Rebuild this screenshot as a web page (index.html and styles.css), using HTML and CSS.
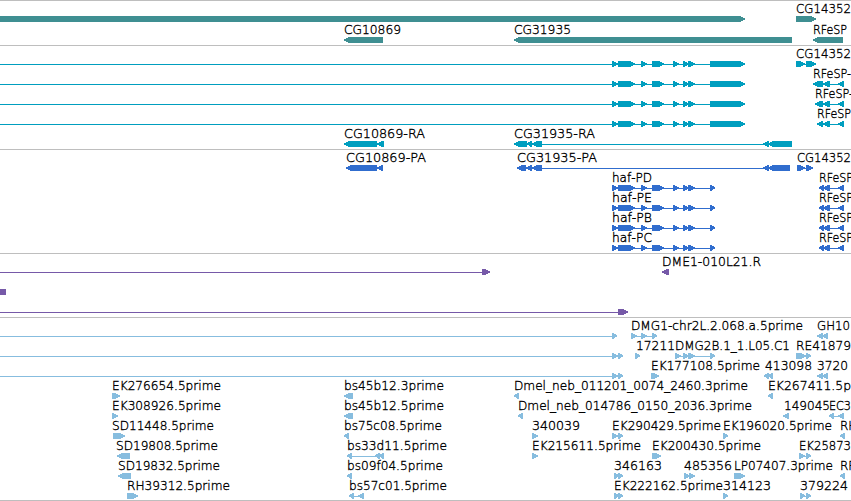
FILE: index.html
```html
<!DOCTYPE html>
<html lang="en">
<head>
<meta charset="utf-8">
<title>Genome browser</title>
<link rel="stylesheet" href="styles.css">
</head>
<body>
<main class="browser" id="browser"></main>
<script src="tracks.js"></script>
</body>
</html>
```
FILE: styles.css
```css
body {
  margin: 0;
  background: #fff;
  overflow: hidden;
}

.browser {
  display: flex;
  flex-direction: column;
  width: 851px;
  height: 501px;
  overflow: hidden;
}

.track {
  box-sizing: border-box;
  flex: none;
  border-top: 1px solid #bebebe;
}

.track:last-child {
  border-bottom: 1px solid #bebebe;
}

.genes { color: #3f8f92; padding-bottom: 2px; }
.transcripts { color: #009ebf; padding-bottom: 3px; }
.proteins { color: #306dce; padding-bottom: 3px; }
.bac { color: #7659a8; padding-bottom: 3px; }
.est { color: #87bddf; padding-bottom: 2px; }

.lane {
  display: block;
  width: 851px;
  height: 20px;
  overflow: visible;
}

.genes .lane { height: 21px; }

.shape {
  fill: currentColor;
  shape-rendering: crispEdges;
}

.label {
  fill: #000;
  stroke: #000;
  stroke-width: 0.35px;
  font: 200 12px "DejaVu Sans Light", "DejaVu Sans", sans-serif;
}
```
FILE: tracks.js
```
// A feature is [direction, exons, label, labelStart, labelWidth]; exons are [start, end] pairs.
const R = 1, L = -1;
const coding = [[612, 618], [618, 635], [641, 647], [652, 664], [673, 679], [683, 689], [688, 695]];
const haf = [R, [[-20, -10], ...coding, [710, 745]]];
const protein = name => [[R, [...coding, [710, 715]], name, 612, 40], [L, [[819, 824], [823, 830], [838, 844]], 'RFeSP', 819, 34]];

const tracks = [
  ['genes', [
    [[R, [[-20, 745]]], [R, [[796, 816]], 'CG14352', 796, 55]],
    [[L, [[344, 383]], 'CG10869', 344, 57], [L, [[514, 792]], 'CG31935', 514, 57], [L, [[813, 843]], 'RFeSP', 813, 34]]
  ]],
  ['transcripts', [
    [haf, [R, [[796, 805], [806, 816]], 'CG14352', 796, 55]],
    [haf, [L, [[813, 823], [823, 830], [838, 844]], 'RFeSP-', 813, 38]],
    [haf, [L, [[815, 823], [823, 830], [838, 844]], 'RFeSP-', 815, 38]],
    [haf, [L, [[817, 823], [823, 830], [838, 844]], 'RFeSP', 817, 34]],
    [[L, [[344, 377], [377, 384]], 'CG10869-RA', 344, 81], [L, [[514, 527], [527, 532], [532, 542], [763, 769], [768, 792]], 'CG31935-RA', 514, 81]]
  ]],
  ['proteins', [
    [[L, [[346, 377], [377, 383]], 'CG10869-PA', 346, 80], [L, [[517, 526], [526, 532], [532, 542], [763, 769], [768, 790]], 'CG31935-PA', 517, 80], [R, [[797, 805], [806, 813]], 'CG14352', 797, 54]],
    protein('haf-PD'), protein('haf-PE'), protein('haf-PB'), protein('haf-PC')
  ]],
  ['bac', [
    [[R, [[-20, -10], [482, 490]]], [L, [[662, 669]], 'DME1-010L21.R', 662, 99]],
    [['box', [[-20, 6]]]],
    [[R, [[-20, -10], [618, 628]]]]
  ]],
  ['est', [
    [[R, [[-20, -10], [612, 617]]], [R, [[631, 637], [641, 647], [652, 657]], 'DMG1-chr2L.2.068.a.5prime', 631, 172], [L, [[817, 823], [822, 828]], 'GH10', 817, 33]],
    [[R, [[-20, -10], [612, 618], [618, 623]]], [R, [[635, 640]], '17211', 636, 39], [R, [[675, 681], [683, 689], [688, 695], [710, 715]], 'DMG2B.1_1.L05.C1', 675, 115], [R, [[796, 806], [806, 811]], 'RE41879', 796, 55]],
    [[R, [[-20, -10], [612, 618], [618, 623]]], [R, [[651, 659]], 'EK177108.5prime', 651, 109], [L, [[764, 769], [768, 773]], '413098', 765, 47], [L, [[817, 823], [822, 828]], '3720', 817, 31]],
    [[R, [[112, 120]], 'EK276654.5prime', 112, 109], [L, [[344, 353]], 'bs45b12.3prime', 344, 100], [L, [[514, 519]], 'Dmel_neb_011201_0074_2460.3prime', 514, 234], [L, [[768, 773]], 'EK267411.5p', 768, 83]],
    [[R, [[112, 118]], 'EK308926.5prime', 112, 109], [L, [[344, 353]], 'bs45b12.5prime', 344, 100], [L, [[518, 523]], 'Dmel_neb_014786_0150_2036.3prime', 518, 234], [L, [[783, 789]], '149045', 784, 46], [L, [[829, 834], [838, 844]], 'EC3', 829, 22]],
    [[R, [[113, 125]], 'SD11448.5prime', 112, 102], [L, [[344, 349]], 'bs75c08.5prime', 344, 98], [R, [[532, 538]], '340039', 532, 48], [R, [[612, 618], [618, 623]], 'EK290429.5prime', 612, 109], [R, [[723, 728]], 'EK196020.5prime', 723, 109], [L, [[840, 845]], 'RH', 840]],
    [[L, [[117, 130]], 'SD19808.5prime', 116, 102], [L, [[347, 352], [375, 380], [379, 384]], 'bs33d11.5prime', 347, 100], [R, [[532, 538]], 'EK215611.5prime', 532, 109], [R, [[652, 661]], 'EK200430.5prime', 652, 109], [R, [[799, 805], [806, 811]], 'EK25873', 799, 52]],
    [[L, [[118, 131]], 'SD19832.5prime', 118, 102], [L, [[347, 352]], 'bs09f04.5prime', 347, 96], [R, [[614, 619], [618, 623]], '346163', 614, 48], [R, [[684, 690], [689, 695]], '485356', 684, 48], [R, [[734, 745]], 'LP07407.3prime', 734, 99], [L, [[840, 845]], 'RF', 840]],
    [[R, [[127, 138]], 'RH39312.5prime', 127, 103], [L, [[349, 354], [358, 364]], 'bs57c01.5prime', 349, 98], [R, [[614, 619], [618, 623]], 'EK222162.5prime', 614, 109], [R, [[723, 728]], '314123', 723, 48], [R, [[800, 805], [806, 811]], '379224', 800, 48]]
  ]]
];

function points(dir, start, end) {
  if (dir === 'box') return `${start},15 ${end},15 ${end},21 ${start},21`;
  const head = Math.min(6, end - start);
  return dir === R
    ? `${start},15 ${end - head},15 ${end - head + 2},15.4 ${end},17.6 ${end},18.4 ${end - head + 2},20.6 ${end - head},21 ${start},21`
    : `${end},15 ${start + head},15 ${start + head - 2},15.4 ${start},17.6 ${start},18.4 ${start + head - 2},20.6 ${start + head},21 ${end},21`;
}

function feature([dir, exons, name, x, width]) {
  const from = exons[0][0], to = exons[exons.length - 1][1] - 1;
  let out = exons.length > 1 ? `<rect class="shape" x="${from + 1}" y="18" width="${to - from - 1}" height="1"/>` : '';
  out += exons.map(([a, b]) => `<polygon class="shape" points="${points(dir, a, b)}"/>`).join('');
  if (name) out += `<text class="label" x="${x}" y="12"${width ? ` textLength="${width}" lengthAdjust="spacingAndGlyphs"` : ''}>${name}</text>`;
  return out;
}

document.getElementById('browser').innerHTML = tracks.map(([kind, lanes]) =>
  `<section class="track ${kind}">${lanes.map(lane => `<svg class="lane">${lane.map(feature).join('')}</svg>`).join('')}</section>`
).join('');
```
